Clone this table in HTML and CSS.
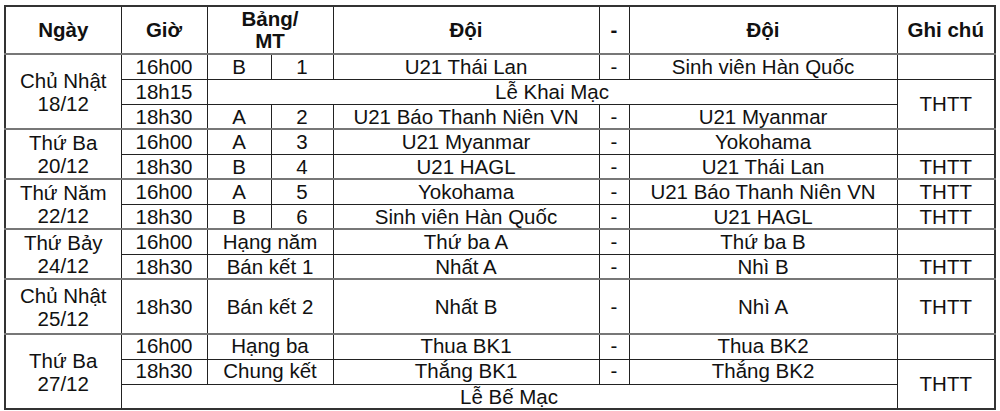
FILE: index.html
```html
<!DOCTYPE html>
<html lang="vi">
<head>
<meta charset="utf-8">
<title>Lịch thi đấu</title>
<link rel="stylesheet" href="styles.css">
</head>
<body>
<div class="page">
<table class="schedule">
  <colgroup>
    <col class="c-day"><col class="c-time"><col class="c-group"><col class="c-match">
    <col class="c-team"><col class="c-dash"><col class="c-team2"><col class="c-note">
  </colgroup>
  <thead>
    <tr class="head">
      <th>Ngày</th><th>Giờ</th><th colspan="2">Bảng/<br>MT</th><th>Đội</th><th>-</th><th>Đội</th><th>Ghi chú</th>
    </tr>
  </thead>
  <tbody>
    <tr class="grp">
      <td rowspan="3">Chủ Nhật<br>18/12</td><td>16h00</td><td>B</td><td>1</td><td>U21 Thái Lan</td><td>-</td><td>Sinh viên Hàn Quốc</td><td></td>
    </tr>
    <tr class="sub">
      <td>18h15</td><td colspan="5">Lễ Khai Mạc</td><td rowspan="2">THTT</td>
    </tr>
    <tr>
      <td>18h30</td><td>A</td><td>2</td><td>U21 Báo Thanh Niên VN</td><td>-</td><td>U21 Myanmar</td>
    </tr>
    <tr class="grp">
      <td rowspan="2">Thứ Ba<br>20/12</td><td>16h00</td><td>A</td><td>3</td><td>U21 Myanmar</td><td>-</td><td>Yokohama</td><td></td>
    </tr>
    <tr>
      <td>18h30</td><td>B</td><td>4</td><td>U21 HAGL</td><td>-</td><td>U21 Thái Lan</td><td>THTT</td>
    </tr>
    <tr class="grp">
      <td rowspan="2">Thứ Năm<br>22/12</td><td>16h00</td><td>A</td><td>5</td><td>Yokohama</td><td>-</td><td>U21 Báo Thanh Niên VN</td><td>THTT</td>
    </tr>
    <tr>
      <td>18h30</td><td>B</td><td>6</td><td>Sinh viên Hàn Quốc</td><td>-</td><td>U21 HAGL</td><td>THTT</td>
    </tr>
    <tr class="grp">
      <td rowspan="2">Thứ Bảy<br>24/12</td><td>16h00</td><td colspan="2">Hạng năm</td><td>Thứ ba A</td><td>-</td><td>Thứ ba B</td><td></td>
    </tr>
    <tr>
      <td>18h30</td><td colspan="2">Bán kết 1</td><td>Nhất A</td><td>-</td><td>Nhì B</td><td>THTT</td>
    </tr>
    <tr class="grp tall">
      <td>Chủ Nhật<br>25/12</td><td>18h30</td><td colspan="2">Bán kết 2</td><td>Nhất B</td><td>-</td><td>Nhì A</td><td>THTT</td>
    </tr>
    <tr class="grp top">
      <td rowspan="3">Thứ Ba<br>27/12</td><td>16h00</td><td colspan="2">Hạng ba</td><td>Thua BK1</td><td>-</td><td>Thua BK2</td><td></td>
    </tr>
    <tr class="top">
      <td>18h30</td><td colspan="2">Chung kết</td><td>Thắng BK1</td><td>-</td><td>Thắng BK2</td><td rowspan="2" class="mid">THTT</td>
    </tr>
    <tr>
      <td colspan="6">Lễ Bế Mạc</td>
    </tr>
  </tbody>
</table>
</div>
</body>
</html>
```

FILE: styles.css
```css
html, body {
  margin: 0;
  padding: 0;
  background: #ffffff;
}

.page {
  padding: 5px 0 0 4px;
}

.schedule {
  border-collapse: collapse;
  table-layout: fixed;
  width: 990px;
  font-family: "Liberation Sans", Arial, sans-serif;
  font-size: 20.5px;
  color: #111111;
  border: 2px solid #333333;
}

.c-day { width: 116px; }
.c-time { width: 86px; }
.c-group { width: 64px; }
.c-match { width: 62px; }
.c-team { width: 266px; }
.c-dash { width: 30px; }
.c-team2 { width: 268px; }
.c-note { width: 98px; }

.schedule th,
.schedule td {
  border: 1px solid #222222;
  padding: 0;
  text-align: center;
  vertical-align: middle;
  white-space: nowrap;
  overflow: hidden;
}

.schedule th {
  font-weight: bold;
  line-height: 22px;
}

.schedule td {
  line-height: 23px;
}

.head {
  height: 48px;
}

.schedule tbody tr {
  height: 25px;
}

.schedule tbody tr.tall {
  height: 55px;
}

.schedule tr.grp > td {
  border-top: 2px solid #777777;
}

.schedule tr.sub > td {
  border-top: 1px solid #666666;
}

.schedule tr.top > td {
  vertical-align: top;
  line-height: 22px;
}

.schedule tr.top > td[rowspan="3"],
.schedule tr.top > td.mid {
  vertical-align: middle;
  line-height: 23px;
}
```
